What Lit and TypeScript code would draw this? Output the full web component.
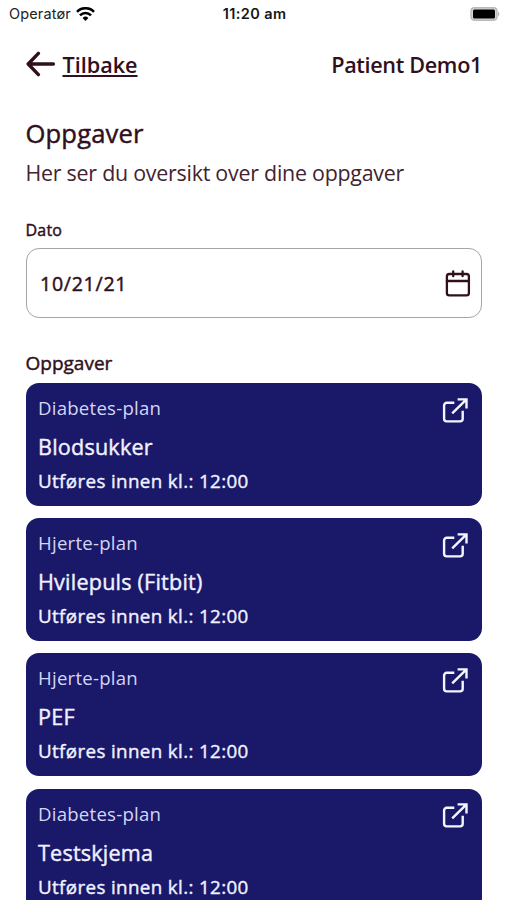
import { LitElement, html, css } from "lit";
import { customElement, property } from "lit/decorators.js";

interface Task {
  plan: string;
  title: string;
  due: string;
}

const TASKS: Task[] = [
  { plan: "Diabetes-plan", title: "Blodsukker", due: "12:00" },
  { plan: "Hjerte-plan", title: "Hvilepuls (Fitbit)", due: "12:00" },
  { plan: "Hjerte-plan", title: "PEF", due: "12:00" },
  { plan: "Diabetes-plan", title: "Testskjema", due: "12:00" },
];

@customElement("status-bar")
class StatusBar extends LitElement {
  static styles = css`
    :host {
      display: grid;
      grid-template-columns: 1fr auto 1fr;
      align-items: center;
      height: 28px;
      padding: 0 7px 0 9px;
      box-sizing: border-box;
      font: 400 14.5px/28px Inter, sans-serif;
      color: #222;
    }
    .carrier {
      display: flex;
      align-items: center;
      gap: 5px;
    }
    .name {
      letter-spacing: 0.15px;
    }
    .time {
      font-weight: 600;
      letter-spacing: 0.4px;
      color: #161616;
    }
    .battery {
      justify-self: end;
    }
    svg {
      display: block;
    }
  `;
  render() {
    return html`
      <div class="carrier">
        <span class="name">Operatør</span>
        <svg width="19" height="15" viewBox="0 0 19 15" fill="none" stroke="#000" stroke-width="2.6">
          <path d="M1 4.8a12 12 0 0 1 17 0" />
          <path d="M4 8.3a7.8 7.8 0 0 1 11 0" />
          <path d="M6.6 11a4.1 4.1 0 0 1 5.8 0L9.5 14z" fill="#000" stroke="none" />
        </svg>
      </div>
      <span class="time">11:20 am</span>
      <svg class="battery" width="30" height="14" viewBox="0 0 30 14">
        <rect x="1" y="0.8" width="26" height="12.4" rx="3.4" fill="#d4d4d4" stroke="#b9b9b9" stroke-width="1.4" />
        <rect x="3" y="2.4" width="22" height="9.2" rx="1.5" fill="#000" />
        <path d="M28.2 4.6q2.4 2.4 0 4.8z" fill="#aaa" />
      </svg>
    `;
  }
}

@customElement("task-card")
class TaskCard extends LitElement {
  @property({ attribute: false }) task!: Task;
  static styles = css`
    :host {
      display: flex;
      justify-content: space-between;
      align-items: flex-start;
      flex: none;
      height: 122.6px;
      box-sizing: border-box;
      padding: 10px 13px 0 12.5px;
      border-radius: 13px;
      background: #191869;
      color: #f1f1ff;
    }
    .text {
      display: flex;
      flex-direction: column;
      white-space: nowrap;
      align-items: flex-start;
    }
    .plan {
      font-size: 18.6px;
      line-height: 30px;
      letter-spacing: 0.24px;
      color: #d5d5f4;
    }
    .title {
      font-size: 21.6px;
      line-height: 48px;
      letter-spacing: 0.2px;
      -webkit-text-stroke: 0.4px currentColor;
    }
    .due {
      font-size: 18.8px;
      line-height: 20px;
      letter-spacing: 0.36px;
      -webkit-text-stroke: 0.4px currentColor;
    }
    svg {
      display: block;
      margin-top: 3.6px;
    }
  `;
  render() {
    return html`
      <div class="text">
        <span class="plan">${this.task.plan}</span>
        <span class="title">${this.task.title}</span>
        <span class="due">Utføres innen kl.: ${this.task.due}</span>
      </div>
      <svg width="28" height="28" viewBox="0 0 28 28" fill="none" stroke="#f5f5ff" stroke-width="2.4">
        <path d="M13.3 5.8H5.7a2.6 2.6 0 0 0-2.6 2.6v13.4a2.6 2.6 0 0 0 2.6 2.6h13.4a2.6 2.6 0 0 0 2.6-2.6v-8" />
        <path d="M11.2 16.4 25.2 2.6M16.6 2.4h8.9v9" />
      </svg>
    `;
  }
}

@customElement("app-root")
class AppRoot extends LitElement {
  static styles = css`
    :host {
      display: block;
      height: 900px;
      overflow: hidden;
      background: #fff;
      color: #30101d;
      font-family: "Open Sans", sans-serif;
    }
    main {
      display: flex;
      flex-direction: column;
      padding: 0 25px 0 25.5px;
    }
    header {
      display: flex;
      align-items: center;
      justify-content: space-between;
      height: 72px;
      font-size: 21.6px;
      font-weight: 600;
    }
    .back {
      display: flex;
      align-items: center;
      gap: 7px;
    }
    .label {
      text-decoration: underline;
      text-decoration-thickness: 1.5px;
      text-underline-offset: 2px;
    }
    .patient {
      letter-spacing: -0.33px;
    }
    h1,
    h2,
    .caption,
    .date {
      font-weight: 400;
      -webkit-text-stroke: 0.45px currentColor;
    }
    h1 {
      margin: 14px 0 0;
      font-size: 25.6px;
      line-height: 40px;
      letter-spacing: 0.15px;
    }
    .lead {
      font-size: 21.4px;
      line-height: 38px;
      letter-spacing: -0.24px;
      color: #43232f;
    }
    .caption {
      margin-top: 26px;
      font-size: 16px;
      line-height: 24px;
      letter-spacing: 0.2px;
    }
    .date {
      display: flex;
      align-items: center;
      justify-content: space-between;
      box-sizing: border-box;
      height: 70px;
      margin-top: 6px;
      padding: 0 10px 0 13.5px;
      border: 1.5px solid #a5a5a5;
      border-radius: 13px;
      font-size: 19.6px;
      letter-spacing: 0.7px;
    }
    h2 {
      margin: 31px 0 6px;
      font-size: 19px;
      line-height: 28px;
    }
    .tasks {
      display: flex;
      flex-direction: column;
      gap: 12.6px;
    }
    svg {
      display: block;
    }
  `;
  render() {
    return html`
      <status-bar></status-bar>
      <main>
        <header>
          <div class="back">
            <svg width="30" height="26" viewBox="0 0 30 26" fill="none" stroke="#30101d" stroke-width="3.4" stroke-linecap="round" stroke-linejoin="round">
              <path d="M27.4 13H3M12.4 2.4 2.2 13l10.2 10.6" />
            </svg>
            <span class="label">Tilbake</span>
          </div>
          <span class="patient">Patient Demo1</span>
        </header>
        <h1>Oppgaver</h1>
        <div class="lead">Her ser du oversikt over dine oppgaver</div>
        <div class="caption">Dato</div>
        <div class="date">
          <span>10/21/21</span>
          <svg width="26" height="28" viewBox="0 0 26 28" fill="none" stroke="#30101d" stroke-width="2.3" stroke-linecap="round">
            <rect x="1.9" y="5" width="22" height="21.4" rx="2.4" />
            <path d="M1.9 12h22M8.2 2.4v4.8M17.6 2.4v4.8" />
          </svg>
        </div>
        <h2>Oppgaver</h2>
        <div class="tasks">${TASKS.map((t) => html`<task-card .task=${t}></task-card>`)}</div>
      </main>
    `;
  }
}
